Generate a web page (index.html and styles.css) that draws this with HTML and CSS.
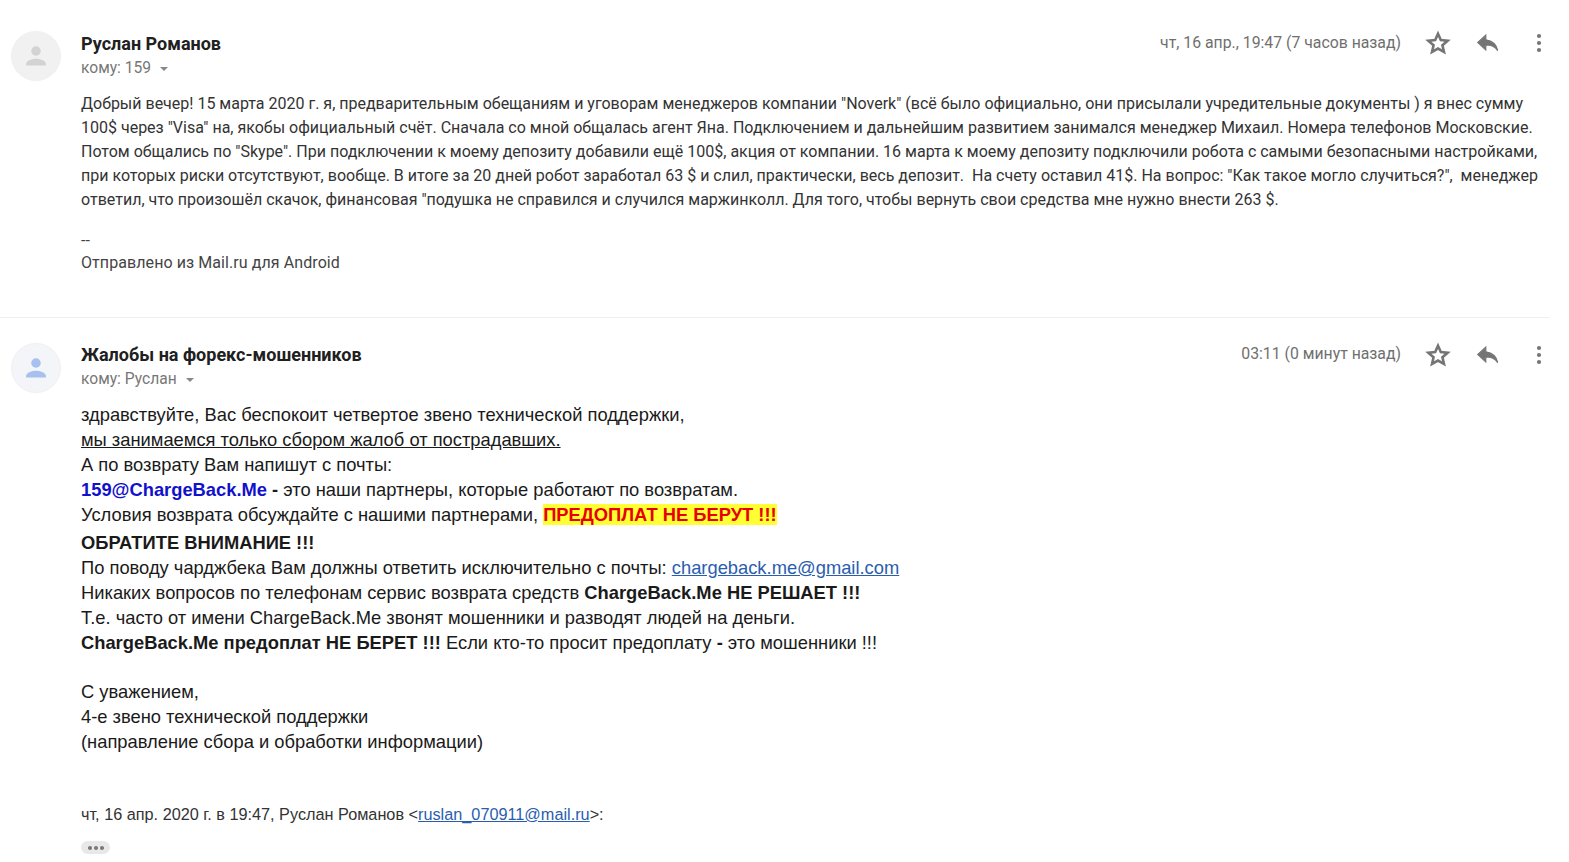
FILE: index.html
```html
<!DOCTYPE html>
<html lang="ru">
<head>
  <meta charset="UTF-8">
  <title>Письмо</title>
  <link rel="stylesheet" href="styles.css">
</head>
<body>
  <div class="message first">
    <div class="avatar">
      <svg viewBox="0 0 24 24" width="30" height="30"><circle cx="12" cy="8" r="3.8" fill="#d3d3d3"/><path d="M4 19.5v-1.2c0-2.8 5.3-4.200 8-4.200s8 1.400 8 4.200v1.200z" fill="#d3d3d3"/></svg>
    </div>
    <div class="content">
      <div class="head">
        <div class="who">
          <div class="name">Руслан Романов</div>
          <div class="to">кому: 159 <span class="caret"></span></div>
        </div>
        <div class="date">чт, 16 апр., 19:47 (7 часов назад)</div>
        <div class="actions">
          <svg class="star" viewBox="0 0 24 24" width="26" height="26"><path d="M12 3.500l2.600 5.800 6.300.6-4.800 4.200 1.400 6.200L12 17.100l-5.500 3.200 1.400-6.200-4.800-4.200 6.300-.6z" fill="none" stroke="#757575" stroke-width="2.400"/></svg>
          <svg class="reply" viewBox="0 0 24 24" width="26" height="26"><path d="M10 9V4.500L2.500 11.500 10 18.500v-4.600c5 0 8.500 1.600 11 5.100-1-5-4-9-11-10z" fill="#757575" stroke="#757575" stroke-width="1"/></svg>
          <svg class="more" viewBox="0 0 6 24" width="6" height="24"><circle cx="3" cy="5" r="2.100" fill="#757575"/><circle cx="3" cy="12" r="2.100" fill="#757575"/><circle cx="3" cy="19" r="2.100" fill="#757575"/></svg>
        </div>
      </div>
      <div class="body-small">
        Добрый вечер! 15 марта 2020 г. я, предварительным обещаниям и уговорам менеджеров компании "Noverk" (всё было официально, они присылали учредительные документы ) я внес сумму<br>
        100$ через "Visa" на, якобы официальный счёт. Сначала со мной общалась агент Яна. Подключением и дальнейшим развитием занимался менеджер Михаил. Номера телефонов Московские.<br>
        Потом общались по "Skype". При подключении к моему депозиту добавили ещё 100$, акция от компании. 16 марта к моему депозиту подключили робота с самыми безопасными настройками,<br>
        при которых риски отсутствуют, вообще. В итоге за 20 дней робот заработал 63 $ и слил, практически, весь депозит.&nbsp; На счету оставил 41$. На вопрос: "Как такое могло случиться?",&nbsp; менеджер<br>
        ответил, что произошёл скачок, финансовая "подушка не справился и случился маржинколл. Для того, чтобы вернуть свои средства мне нужно внести 263 $.
        <div class="sign">--<br>Отправлено из Mail.ru для Android</div>
      </div>
    </div>
  </div>

  <div class="message second">
    <div class="avatar">
      <svg viewBox="0 0 24 24" width="30" height="30"><circle cx="12" cy="8" r="3.8" fill="#a6c1ee"/><path d="M4 19.500v-1.200c0-2.800 5.300-4.200 8-4.200s8 1.400 8 4.200v1.200z" fill="#a6c1ee"/></svg>
    </div>
    <div class="content">
      <div class="head">
        <div class="who">
          <div class="name">Жалобы на форекс-мошенников</div>
          <div class="to">кому: Руслан <span class="caret"></span></div>
        </div>
        <div class="date">03:11 (0 минут назад)</div>
        <div class="actions">
          <svg class="star" viewBox="0 0 24 24" width="26" height="26"><path d="M12 3.500l2.600 5.800 6.300.6-4.800 4.200 1.400 6.200L12 17.100l-5.500 3.200 1.400-6.200-4.800-4.200 6.300-.6z" fill="none" stroke="#757575" stroke-width="2.400"/></svg>
          <svg class="reply" viewBox="0 0 24 24" width="26" height="26"><path d="M10 9V4.500L2.500 11.500 10 18.500v-4.600c5 0 8.500 1.600 11 5.100-1-5-4-9-11-10z" fill="#757575" stroke="#757575" stroke-width="1"/></svg>
          <svg class="more" viewBox="0 0 6 24" width="6" height="24"><circle cx="3" cy="5" r="2.100" fill="#757575"/><circle cx="3" cy="12" r="2.100" fill="#757575"/><circle cx="3" cy="19" r="2.100" fill="#757575"/></svg>
        </div>
      </div>
      <div class="body-large">
        <div>здравствуйте, Вас беспокоит четвертое звено технической поддержки,</div>
        <div class="under">мы занимаемся только сбором жалоб от пострадавших.</div>
        <div>А по возврату Вам напишут с почты:</div>
        <div><b class="blue">159@ChargeBack.Me</b> <b>-</b> это наши партнеры, которые работают по возвратам.</div>
        <div>Условия возврата обсуждайте с нашими партнерами, <b class="alert">ПРЕДОПЛАТ НЕ БЕРУТ !!!</b></div>
        <div class="notice"><b>ОБРАТИТЕ ВНИМАНИЕ !!!</b></div>
        <div>По поводу чарджбека Вам должны ответить исключительно с почты: <a href="#">chargeback.me@gmail.com</a></div>
        <div>Никаких вопросов по телефонам сервис возврата средств <b>ChargeBack.Me НЕ РЕШАЕТ !!!</b></div>
        <div>Т.е. часто от имени ChargeBack.Me звонят мошенники и разводят людей на деньги.</div>
        <div><b>ChargeBack.Me предоплат НЕ БЕРЕТ !!!</b> Если кто-то просит предоплату <b>-</b> это мошенники !!!</div>
        <div class="regards">С уважением,</div>
        <div>4-е звено технической поддержки</div>
        <div>(направление сбора и обработки информации)</div>
      </div>
      <div class="quote-line">чт, 16 апр. 2020 г. в 19:47, Руслан Романов &lt;<a href="#">ruslan_070911@mail.ru</a>&gt;:</div>
      <div class="dots"><i></i><i></i><i></i></div>
    </div>
  </div>
</body>
</html>
```

FILE: styles.css
```css
html, body {
  height: 862px;
  overflow: hidden;
}

body {
  margin: 0;
  background: #fff;
  color: #222;
  font-family: Roboto, "Liberation Sans", sans-serif;
}

.message {
  display: flex;
  gap: 20px;
  width: 1538px;
  padding-left: 11px;
}

.first {
  height: 286px;
  padding-top: 31px;
  border-bottom: 1px solid #efefef;
}

.second {
  padding-top: 25px;
}

.avatar {
  flex: none;
  width: 48px;
  height: 48px;
  border: 1px solid #f0f0f0;
  border-radius: 50%;
  background: #f1f1f1;
  display: flex;
  align-items: center;
  justify-content: center;
}

.second .avatar {
  background: #f3f5f9;
}

.content {
  flex: 1;
  min-width: 0;
}

.head {
  display: flex;
  align-items: flex-start;
  height: 59px;
}

.first .head {
  height: 61px;
}

.first .who {
  margin-top: 1px;
}

.second .date {
  margin-top: -1px;
}

.who {
  flex: 1;
}

.name {
  font-size: 18px;
  font-weight: 700;
  line-height: 24px;
  color: #202020;
}

.to {
  font-size: 15.6px;
  line-height: 24px;
  color: #777;
}

.caret {
  display: inline-block;
  margin-left: 5px;
  vertical-align: middle;
  border-left: 4.5px solid transparent;
  border-right: 4.5px solid transparent;
  border-top: 4.5px solid #888;
}

.date {
  font-size: 15.8px;
  line-height: 24px;
  color: #6f6f6f;
}

.actions {
  display: flex;
  flex: none;
  align-items: center;
  width: 148px;
  height: 26px;
  margin-top: -1px;
  padding-left: 24px;
  box-sizing: border-box;
  gap: 24px;
}

.more {
  margin-left: 11px;
}

.body-small {
  font-size: 16px;
  line-height: 24px;
  color: #333;
  white-space: nowrap;
}

.sign {
  margin-top: 18px;
  letter-spacing: .08px;
  line-height: 22px;
  color: #444;
}

.body-large {
  font-family: "Liberation Sans", Arial, sans-serif;
  font-size: 18.33px;
  line-height: 25px;
  color: #1a1a1a;
  white-space: nowrap;
}

.under {
  text-decoration: underline;
}

.blue {
  color: #1111cc;
}

.alert {
  color: #e60000;
  background: #ffff33;
}

.notice {
  margin-top: 3px;
}

.body-large a, .quote-line a {
  color: #2a5db0;
}

.regards {
  margin-top: 24px;
}

.quote-line {
  margin-top: 48px;
  font-size: 16.25px;
  line-height: 24px;
  color: #333;
  font-family: "Liberation Sans", Arial, sans-serif;
}

.dots {
  display: flex;
  justify-content: center;
  align-items: center;
  gap: 2px;
  width: 29px;
  height: 13px;
  margin-top: 15px;
  background: #e8e8e8;
  border-radius: 7px;
}

.dots i {
  width: 4px;
  height: 4px;
  border-radius: 50%;
  background: #777;
}
```
